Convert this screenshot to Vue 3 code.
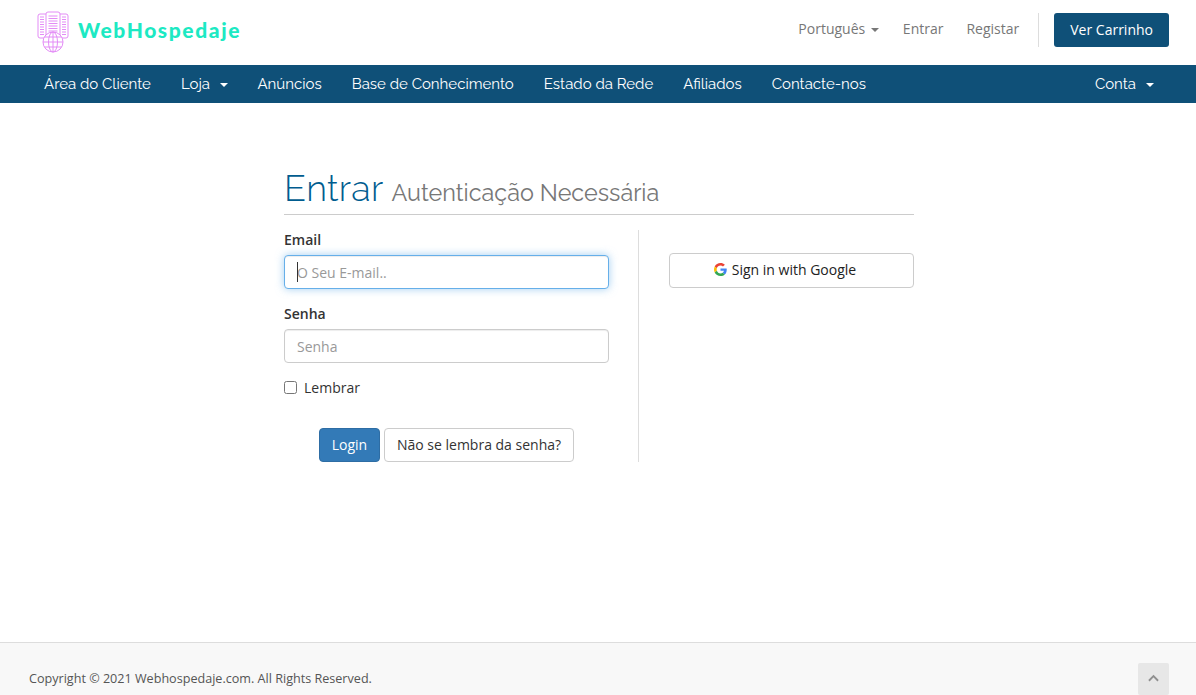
<script setup>
import { ref, onMounted } from 'vue'

const emailInput = ref(null)

const navLinks = [
  { label: 'Área do Cliente' },
  { label: 'Loja', caret: true },
  { label: 'Anúncios' },
  { label: 'Base de Conhecimento' },
  { label: 'Estado da Rede' },
  { label: 'Afiliados' },
  { label: 'Contacte-nos' }
]

const lines = [0, 1, 2, 3, 4, 5, 6, 7]

onMounted(() => {
  emailInput.value.focus()
})
</script>

<template>
  <div class="page">
    <header class="top-bar">
      <a class="brand" href="#">
        <svg class="brand-icon" viewBox="0 0 32 42" fill="none" stroke="#e38cf6" stroke-width="1">
          <path d="M9 3H3a2 2 0 0 0-2 2v20a2 2 0 0 0 2 2h6" />
          <path d="M23 3h6a2 2 0 0 1 2 2v20a2 2 0 0 1-2 2h-6" />
          <rect x="9" y="1" width="14" height="26" rx="2" fill="#fff" />
          <g v-for="n in lines" :key="n">
            <path :d="`M11.5 ${5 + n * 2.5}h9`" />
            <path :d="`M3 ${6 + n * 2.5}h4`" />
            <path :d="`M25 ${6 + n * 2.5}h4`" />
          </g>
          <circle cx="16" cy="31" r="10" fill="#fff" />
          <ellipse cx="16" cy="31" rx="4.5" ry="10" />
          <path d="M16 21v20M6 31h20M7.500 26h17M7.500 36h17" />
        </svg>
        <span class="brand-name">WebHospedaje</span>
      </a>
      <div class="top-actions">
        <a class="top-link" href="#">Português <i class="caret"></i></a>
        <a class="top-link" href="#">Entrar</a>
        <a class="top-link" href="#">Registar</a>
        <span class="top-divider"></span>
        <a class="cart-btn" href="#">Ver Carrinho</a>
      </div>
    </header>

    <nav class="main-nav">
      <div class="nav-left">
        <a v-for="link in navLinks" :key="link.label" class="nav-link" href="#">
          {{ link.label }}<i v-if="link.caret" class="caret nav-caret"></i>
        </a>
      </div>
      <a class="nav-link" href="#">Conta<i class="caret nav-caret"></i></a>
    </nav>

    <main class="content">
      <div class="login-box">
        <div class="title-row">
          <h1>Entrar</h1>
          <small>Autenticação Necessária</small>
        </div>
        <div class="columns">
          <form class="login-form" @submit.prevent>
            <label class="field-label" for="email">Email</label>
            <div class="field-wrap">
              <input id="email" ref="emailInput" class="field" type="email" placeholder="O Seu E-mail.." />
              <span class="text-cursor"></span>
            </div>
            <label class="field-label second" for="senha">Senha</label>
            <input id="senha" class="field" type="password" placeholder="Senha" />
            <label class="remember">
              <input type="checkbox" />
              <span>Lembrar</span>
            </label>
            <div class="form-actions">
              <button class="btn btn-login" type="submit">Login</button>
              <button class="btn" type="button">Não se lembra da senha?</button>
            </div>
          </form>
          <div class="social">
            <button class="btn btn-google" type="button">
              <svg viewBox="0 0 48 48" width="13" height="13">
                <path fill="#EA4335" d="M24 9.500c3.500 0 6.700 1.200 9.200 3.600l6.900-6.900C35.900 2.400 30.400 0 24 0 14.600 0 6.500 5.400 2.600 13.200l8 6.200C12.400 13.700 17.700 9.500 24 9.500z" />
                <path fill="#4285F4" d="M47 24.500c0-1.600-.1-3.100-.4-4.500H24v9h12.900c-.6 3-2.200 5.500-4.700 7.200l7.700 6C44.400 38.500 47 32.100 47 24.500z" />
                <path fill="#FBBC05" d="M10.600 28.600c-.5-1.400-.7-3-.7-4.600s.3-3.200.7-4.600l-8-6.200C1 16.500 0 20.100 0 24s1 7.500 2.600 10.800l8-6.200z" />
                <path fill="#34A853" d="M24 48c6.500 0 11.900-2.100 15.900-5.800l-7.700-6c-2.200 1.400-4.900 2.300-8.200 2.300-6.300 0-11.600-4.200-13.400-9.900l-8 6.200C6.500 42.600 14.600 48 24 48z" />
              </svg>
              Sign in with Google
            </button>
          </div>
        </div>
      </div>
    </main>

    <footer class="footer">
      <p>Copyright © 2021 Webhospedaje.com. All Rights Reserved.</p>
      <a class="back-top" href="#" aria-label="Voltar ao topo">
        <svg viewBox="0 0 12 8" width="11" height="8" fill="none" stroke="#8f8f8f" stroke-width="2">
          <path d="M1 7l5-5 5 5" />
        </svg>
      </a>
    </footer>
  </div>
</template>

<style>
html,
body {
  margin: 0;
  height: 100%;
  overflow: hidden;
}
</style>

<style scoped>
.page {
  height: 100vh;
  display: flex;
  flex-direction: column;
  background: #fff;
  color: #333;
  font-family: "Open Sans", "Liberation Sans", sans-serif;
  font-size: 14px;
}

a {
  text-decoration: none;
}

/* barra superior */
.top-bar {
  height: 65px;
  flex: none;
  box-sizing: border-box;
  padding: 0 27px 0 37px;
  display: flex;
  justify-content: space-between;
  align-items: flex-start;
}
.brand {
  display: flex;
  align-items: center;
  gap: 9px;
  margin-top: 11px;
}
.brand-icon {
  width: 32px;
  height: 42px;
}
.brand-name {
  margin-top: -5px;
  font-family: Lato, sans-serif;
  font-weight: 900;
  font-size: 21px;
  letter-spacing: 1.6px;
  color: #1de9c3;
}
.top-actions {
  display: flex;
  align-items: center;
  margin-top: 13px;
}
.top-link {
  margin-top: -4px;
  color: #777;
  margin-right: 23px;
}
.top-link:first-child {
  margin-right: 24px;
}
.top-link:nth-child(3) {
  margin-right: 19px;
}
.top-divider {
  width: 1px;
  height: 34px;
  background: #ddd;
  margin-right: 15px;
}
.cart-btn {
  height: 34px;
  box-sizing: border-box;
  padding: 0 16px 2px;
  display: flex;
  align-items: center;
  background: #0f5078;
  border-radius: 3px;
  color: #fff;
}
.caret {
  display: inline-block;
  margin-left: 2px;
  vertical-align: middle;
  border-top: 4px solid;
  border-left: 4px solid transparent;
  border-right: 4px solid transparent;
}

/* menu principal */
.main-nav {
  height: 38px;
  flex: none;
  box-sizing: border-box;
  padding: 0 42px 0 44px;
  display: flex;
  justify-content: space-between;
  align-items: center;
  background: #0f5078;
}
.nav-left {
  display: flex;
  gap: 30px;
}
.nav-link {
  color: #fff;
  font-family: Raleway, Lato, sans-serif;
  font-size: 15px;
  white-space: nowrap;
}
.nav-caret {
  margin-left: 10px;
}
.nav-left .nav-caret {
  margin-right: -0.5px;
}

/* login */
.content {
  flex: 1;
  padding: 65px 0 0 2px;
  display: flex;
  justify-content: center;
}
.login-box {
  width: 630px;
}
.title-row {
  display: flex;
  align-items: baseline;
  gap: 8px;
  height: 46px;
  border-bottom: 1px solid #ccc;
  font-family: Raleway, Lato, sans-serif;
}
h1 {
  margin: 0;
  font-size: 36px;
  font-weight: 300;
  line-height: 40px;
  letter-spacing: 0.3px;
  color: #005c8f;
}
small {
  font-size: 23.4px;
  font-weight: 400;
  color: #777;
}
.columns {
  display: flex;
  margin-top: 15px;
}
.login-form {
  width: 355px;
  height: 232px;
  box-sizing: border-box;
  padding-right: 29px;
  border-right: 1px solid #ddd;
}
.field-label {
  display: block;
  height: 20px;
  margin-bottom: 5px;
  font-weight: 600;
  line-height: 20px;
}
.field-label.second {
  margin-top: 15px;
}
.field-wrap {
  position: relative;
}
.text-cursor {
  position: absolute;
  left: 13px;
  top: 7px;
  width: 1px;
  height: 20px;
  background: #333;
}
.field {
  display: block;
  width: 100%;
  height: 34px;
  box-sizing: border-box;
  padding: 6px 12px;
  border: 1px solid #ccc;
  border-radius: 4px;
  color: #555;
  font: inherit;
  outline: none;
  caret-color: transparent;
  box-shadow: inset 0 1px 1px rgba(0, 0, 0, 0.075);
}
.field::placeholder {
  color: #999;
}
.field:focus {
  border-color: #66afe9;
  box-shadow: inset 0 1px 1px rgba(0, 0, 0, 0.075), 0 0 8px rgba(102, 175, 233, 0.6);
}
.remember {
  display: flex;
  align-items: center;
  gap: 7px;
  margin-top: 15px;
}
.remember input {
  width: 13px;
  height: 13px;
  margin: 0;
}
.form-actions {
  display: flex;
  justify-content: center;
  gap: 4px;
  margin-top: 31px;
}
.btn {
  height: 34px;
  box-sizing: border-box;
  padding: 0 12px 2px;
  border: 1px solid #ccc;
  border-radius: 4px;
  background: #fff;
  color: #333;
  font: inherit;
}
.btn-login {
  width: 61px;
  padding: 0 0 2px;
  background: #337ab7;
  border-color: #2e6da4;
  color: #fff;
}
.social {
  flex: 1;
  padding: 23px 0 0 30px;
}
.btn-google {
  width: 100%;
  height: 35px;
  padding: 0 25px 2px 12px;
  display: flex;
  justify-content: center;
  align-items: center;
  gap: 5px;
  color: #222;
}

/* rodapé */
.footer {
  height: 53px;
  flex: none;
  box-sizing: border-box;
  padding: 20px 27px 0 29px;
  display: flex;
  justify-content: space-between;
  align-items: flex-start;
  background: #f8f8f8;
  border-top: 1px solid #ddd;
  font-size: 12.6px;
  color: #555;
}
.footer p {
  margin: 7px 0 0;
}
.back-top {
  width: 31px;
  height: 32px;
  padding-bottom: 2px;
  box-sizing: border-box;
  display: flex;
  justify-content: center;
  align-items: center;
  background: #e7e7e7;
  border-radius: 2px;
}
</style>
